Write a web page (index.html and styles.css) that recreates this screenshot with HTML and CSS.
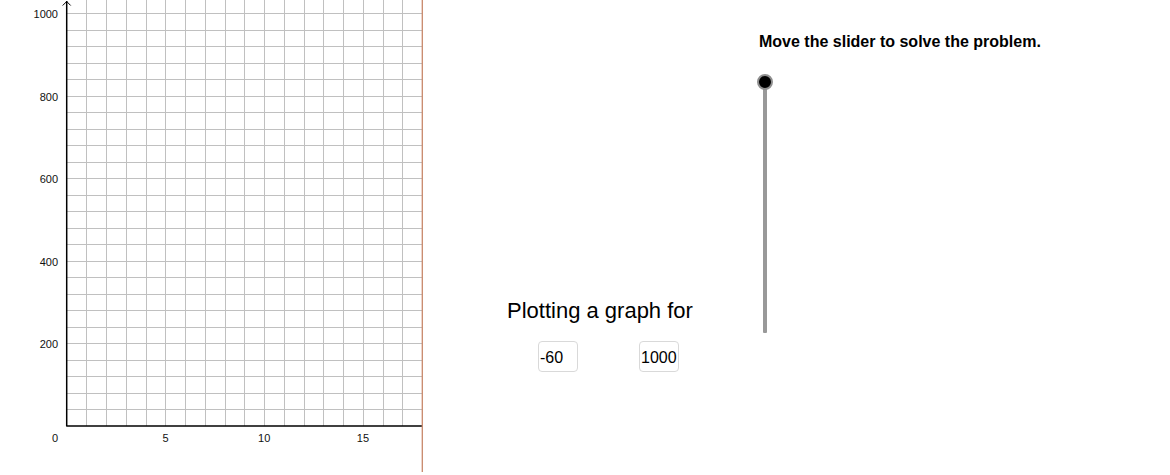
FILE: index.html
```html
<!DOCTYPE html>
<html lang="en">
<head>
    <meta charset="UTF-8">
    <meta name="viewport" content="width=device-width, initial-scale=1.0">
    <title>Plotting a graph</title>
    <link rel="stylesheet" href="styles.css">
</head>
<body>
    <div class="applet">
        <svg class="graph" id="graph" width="425" height="475" viewBox="0 0 425 475">
            <g id="grid" class="grid"></g>
            <line class="axis" x1="66.7" y1="1" x2="66.7" y2="426"></line>
            <line class="axis" x1="66.2" y1="426" x2="422" y2="426"></line>
            <polyline class="arrow" points="62.7,5.5 66.7,1.5 70.7,5.5"></polyline>
            <line class="bound" x1="422.3" y1="0" x2="422.3" y2="472"></line>
            <g id="labels" class="labels"></g>
        </svg>
        <div class="panel">
            <div class="problem">
                <p class="problem-title">Plotting a graph for</p>
                <div class="inputs">
                    <input class="num-input" type="text" value="-60">
                    <input class="num-input" type="text" value="1000">
                </div>
            </div>
            <div class="slider-col">
                <p class="hint">Move the slider to solve the problem.</p>
                <div class="slider">
                    <div class="slider-track"></div>
                    <div class="slider-knob"></div>
                </div>
            </div>
        </div>
    </div>
    <script>
        // graph origin and scale, in pixels
        const ox = 66.7, oy = 426;
        const ux = 19.75, uy = 16.52; // one x unit, 40 y units
        const ns = 'http://www.w3.org/2000/svg';
        const grid = document.getElementById('grid');
        const labels = document.getElementById('labels');

        function line(x1, y1, x2, y2) {
            const l = document.createElementNS(ns, 'line');
            l.setAttribute('x1', x1);
            l.setAttribute('y1', y1);
            l.setAttribute('x2', x2);
            l.setAttribute('y2', y2);
            grid.appendChild(l);
        }

        function label(text, x, y, anchor) {
            const t = document.createElementNS(ns, 'text');
            t.setAttribute('x', x);
            t.setAttribute('y', y);
            t.setAttribute('text-anchor', anchor);
            t.textContent = text;
            labels.appendChild(t);
        }

        for (let k = 1; k <= 17; k++) {
            const x = Math.round(ox + k * ux) + 0.5;
            line(x, 0, x, oy);
        }
        for (let k = 1; k <= 25; k++) {
            const y = Math.round(oy - k * uy) + 0.5;
            line(ox, y, 422, y);
        }

        [200, 400, 600, 800, 1000].forEach(v => {
            label(v, 58, oy - v * 0.413 + 5, 'end');
        });
        label('0', 55, 442, 'middle');
        [5, 10, 15].forEach(v => {
            label(v, ox + v * ux, 442, 'middle');
        });
    </script>
</body>
</html>
```

FILE: styles.css
```css
body {
    margin: 0;
    font-family: "Liberation Sans", Arial, sans-serif;
    background-color: #fff;
    color: #000;
}
.applet {
    display: flex;
    width: 1170px;
    height: 475px;
    overflow: hidden;
}
.graph {
    display: block;
    flex: none;
}
.grid line {
    stroke: #c0c0c0;
    stroke-width: 1;
}
.axis {
    stroke: #000;
    stroke-width: 1.5;
}
.arrow {
    fill: none;
    stroke: #000;
    stroke-width: 1;
}
.bound {
    stroke: #c8876a;
    stroke-width: 1.3;
}
.labels text {
    font-family: "Liberation Sans", Arial, sans-serif;
    font-size: 11px;
    fill: #111;
}
.panel {
    flex: 1;
    display: flex;
    padding-left: 82px;
}
.problem {
    width: 250px;
    padding-top: 298px;
}
.problem-title {
    margin: 0;
    font-size: 22px;
    line-height: 26px;
}
.inputs {
    display: flex;
    gap: 61px;
    margin-top: 17px;
    padding-left: 31px;
}
.num-input {
    width: 40px;
    height: 31px;
    box-sizing: border-box;
    padding: 2px 1px 0;
    border: 1px solid #d9d9d9;
    border-radius: 4px;
    font-family: "Liberation Sans", Arial, sans-serif;
    font-size: 16px;
    color: #000;
    outline: none;
}
.slider-col {
    padding-top: 33px;
}
.hint {
    margin: 0 0 0 2px;
    font-size: 16px;
    line-height: 18px;
    font-weight: bold;
}
.slider {
    position: relative;
    width: 17px;
    margin-top: 23px;
    padding-top: 9px;
}
.slider-track {
    width: 4px;
    height: 250px;
    margin-left: 6px;
    background-color: #999;
    border-radius: 1px;
}
.slider-knob {
    position: absolute;
    top: 0;
    left: 0;
    width: 12px;
    height: 12px;
    border-radius: 50%;
    background-color: #000;
    border: 2.5px solid #8f8f8f;
}
```
